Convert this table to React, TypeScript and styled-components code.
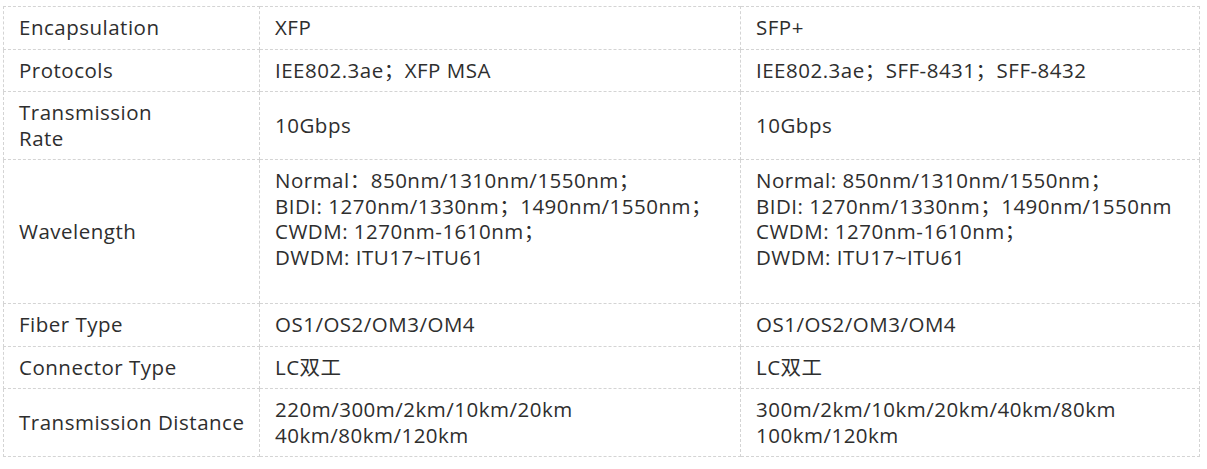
import styled, { createGlobalStyle } from "styled-components";

const GlobalStyle = createGlobalStyle`
  html, body {
    margin: 0;
    padding: 0;
    background: #ffffff;
  }
`;

const Page = styled.div`
  padding: 6px 8px 0 3px;
  font-family: "Open Sans", "Noto Sans CJK SC", sans-serif;
  color: #2e2e2e;
`;

const SpecTable = styled.table`
  width: 1196px;
  border-collapse: collapse;
  table-layout: fixed;
  font-size: 20.5px;
  letter-spacing: 0.5px;
  line-height: 25.5px;
`;

const Col = styled.col<{ $w: number }>`
  width: ${(p) => p.$w}px;
`;

const Cell = styled.td<{ $tail?: boolean }>`
  border: 1px dashed #d4d4d4;
  padding: 8px 6px ${(p) => (p.$tail ? "33px" : "8px")} 15px;
  vertical-align: middle;
  text-align: left;
  white-space: nowrap;
`;

const LabelCell = styled(Cell)`
  padding-bottom: 8px;
`;

interface Spec {
  label: string[];
  xfp: string[];
  sfp: string[];
  tail?: boolean;
}

const specs: Spec[] = [
  { label: ["Encapsulation"], xfp: ["XFP"], sfp: ["SFP+"] },
  {
    label: ["Protocols"],
    xfp: ["IEE802.3ae；XFP MSA"],
    sfp: ["IEE802.3ae；SFF-8431；SFF-8432"],
  },
  { label: ["Transmission", "Rate"], xfp: ["10Gbps"], sfp: ["10Gbps"] },
  {
    label: ["Wavelength"],
    xfp: [
      "Normal：850nm/1310nm/1550nm；",
      "BIDI: 1270nm/1330nm；1490nm/1550nm；",
      "CWDM: 1270nm-1610nm；",
      "DWDM: ITU17~ITU61",
    ],
    sfp: [
      "Normal: 850nm/1310nm/1550nm；",
      "BIDI: 1270nm/1330nm；1490nm/1550nm",
      "CWDM: 1270nm-1610nm；",
      "DWDM: ITU17~ITU61",
    ],
    tail: true,
  },
  { label: ["Fiber Type"], xfp: ["OS1/OS2/OM3/OM4"], sfp: ["OS1/OS2/OM3/OM4"] },
  { label: ["Connector Type"], xfp: ["LC双工"], sfp: ["LC双工"] },
  {
    label: ["Transmission Distance"],
    xfp: ["220m/300m/2km/10km/20km", "40km/80km/120km"],
    sfp: ["300m/2km/10km/20km/40km/80km", "100km/120km"],
  },
];

const Lines = ({ lines }: { lines: string[] }) => (
  <>
    {lines.map((l, i) => (
      <span key={i}>
        {i > 0 && <br />}
        {l}
      </span>
    ))}
  </>
);

export default function App() {
  return (
    <Page>
      <GlobalStyle />
      <SpecTable>
        <colgroup>
          <Col $w={256} />
          <Col $w={481} />
          <Col $w={459} />
        </colgroup>
        <tbody>
          {specs.map((s) => (
            <tr key={s.label.join(" ")}>
              <LabelCell>
                <Lines lines={s.label} />
              </LabelCell>
              <Cell $tail={s.tail}>
                <Lines lines={s.xfp} />
              </Cell>
              <Cell $tail={s.tail}>
                <Lines lines={s.sfp} />
              </Cell>
            </tr>
          ))}
        </tbody>
      </SpecTable>
    </Page>
  );
}
